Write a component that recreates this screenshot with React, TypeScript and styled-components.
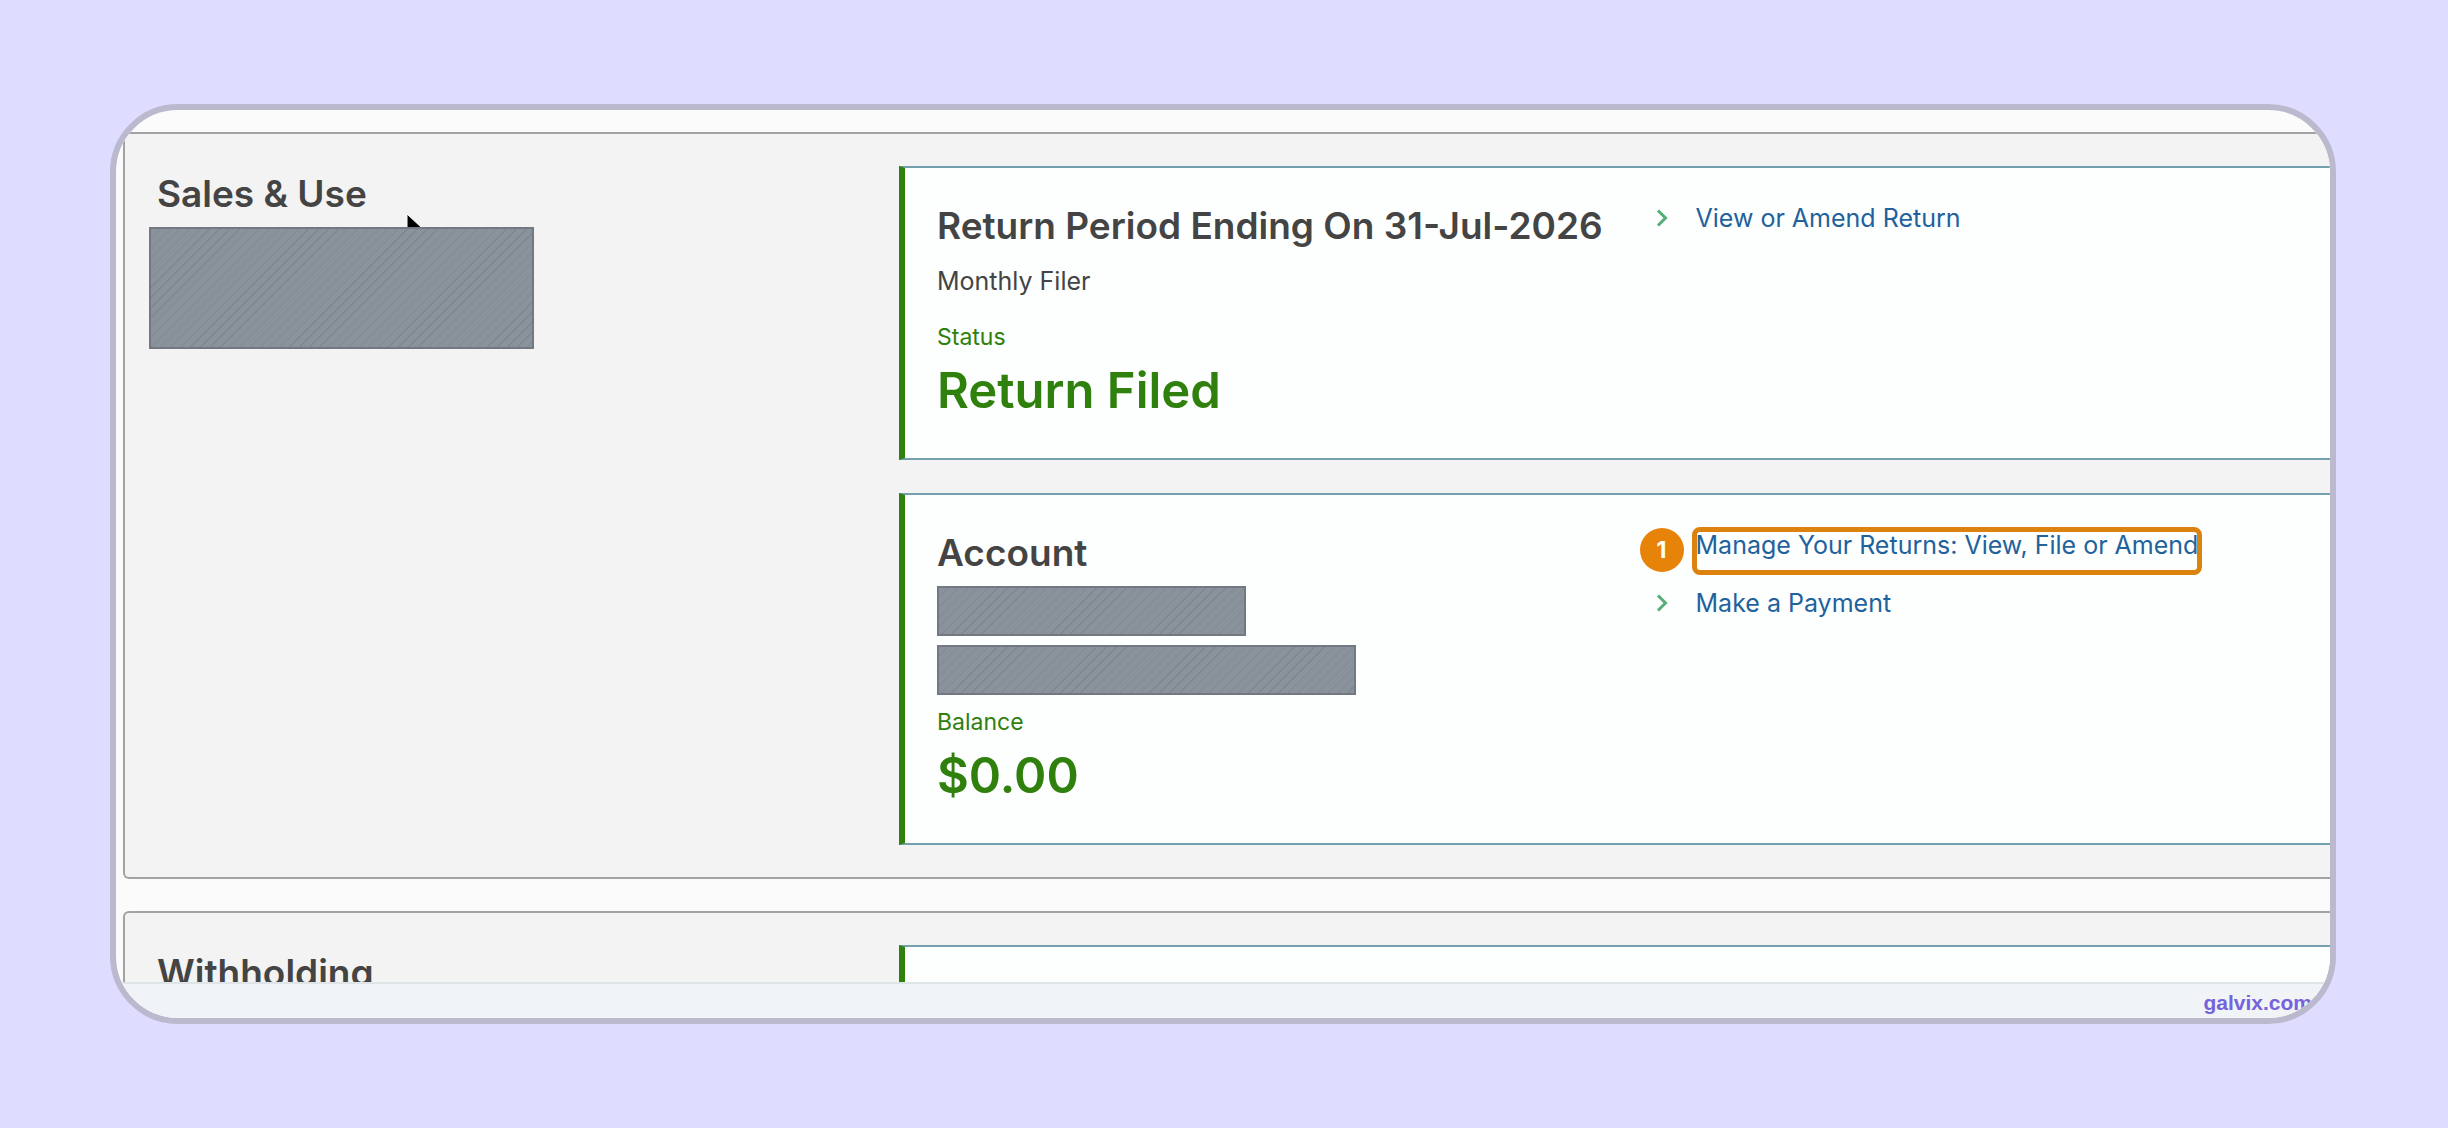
import React from 'react';
import styled, { createGlobalStyle } from 'styled-components';

const GlobalStyle = createGlobalStyle`
  *, *::before, *::after { box-sizing: border-box; }
  body {
    margin: 0;
    background: #dedcff;
    color: #444444;
    font-family: Inter, 'Liberation Sans', sans-serif;
  }
  h2, h3, p, ul, dl, dd { margin: 0; padding: 0; }
`;

const Page = styled.div`
  display: flex;
  height: 100vh;
  padding: 104px 112px 104px 110px;
`;

const Frame = styled.div`
  flex: 1;
  min-width: 0;
  display: flex;
  flex-direction: column;
  overflow: hidden;
  border: 6px solid #bbb9cd;
  border-radius: 68px;
  background: #fbfbfb;
`;

const Viewport = styled.main`
  flex: 1;
  min-height: 0;
  overflow: hidden;
  display: flex;
  flex-direction: column;
  gap: 32px;
  padding: 22px 0 0 7px;
`;

const Panel = styled.section`
  flex: none;
  display: grid;
  grid-template-columns: minmax(0, 742fr) minmax(0, 1431fr);
  padding: 32px 0 32px 32px;
  border: 2px solid #a2a2a2;
  border-right: 0;
  border-radius: 6px 0 0 6px;
  background: #f3f3f3;
`;

const PanelSide = styled.div`
  position: relative;
  padding-top: 4px;
`;

const Cards = styled.div`
  display: flex;
  flex-direction: column;
  gap: 33px;
`;

const Card = styled.article`
  display: grid;
  grid-template-columns: minmax(0, 718fr) minmax(0, 674fr);
  padding: 32px 0 37px 32px;
  border: 2px solid #74a0ae;
  border-left: 6px solid #2f800c;
  border-right: 0;
  background: #fdfefe;
`;

const CardBody = styled.div`
  padding-top: 2px;
`;

const PanelTitle = styled.h2`
  font-size: 37px;
  line-height: 48px;
  font-weight: 600;
`;

const CardTitle = styled.h3`
  font-size: 37px;
  line-height: 48px;
  font-weight: 600;
  white-space: nowrap;
`;

const Detail = styled.p`
  margin-top: 13px;
  font-size: 25px;
  line-height: 36px;
`;

const Summary = styled.dl<{ $gap: number }>`
  && { margin-top: ${(p) => p.$gap}px; }
  color: #2f800c;
`;

const SummaryLabel = styled.dt`
  font-size: 23px;
  line-height: 32px;
`;

const SummaryValue = styled.dd`
  && { margin-top: 8px; }
  font-size: 49px;
  line-height: 60px;
  font-weight: 600;
`;

const Redacted = styled.div<{ $width: number; $height: number; $outdent?: number }>`
  position: relative;
  width: ${(p) => p.$width}px;
  height: ${(p) => p.$height}px;
  margin: 9px 0 0 ${(p) => -(p.$outdent ?? 0)}px;
  border: 2px solid #737982;
  background: repeating-linear-gradient(135deg, #8a929b 0 6px, #7f8791 6px 7px);
`;

const Links = styled.ul`
  display: flex;
  flex-direction: column;
  gap: 22px;
  list-style: none;
`;

const LinkRow = styled.li`
  display: grid;
  grid-template-columns: 40px auto;
  justify-content: start;
  align-items: center;
  line-height: 36px;
`;

const Action = styled.a`
  position: relative;
  color: #1f629c;
  font-size: 25px;
  text-decoration: none;
  white-space: nowrap;
`;

const Highlight = styled.span`
  position: absolute;
  inset: 0 -4px -12px -4px;
  border: 5px solid #dc820f;
  border-radius: 8px;
`;

const StepAnchor = styled.span`
  position: relative;
  height: 36px;
`;

const Step = styled.span`
  position: absolute;
  top: 1px;
  left: -16px;
  width: 44px;
  height: 44px;
  border-radius: 50%;
  background: #e8830a;
  color: #ffffff;
  font-size: 23px;
  line-height: 44px;
  font-weight: 700;
  text-align: center;
`;

const Pointer = styled.svg`
  position: absolute;
  top: 47px;
  left: 248px;
`;

const Footer = styled.footer`
  flex: none;
  height: 36px;
  padding-right: 18px;
  border-top: 2px solid #dfe5e7;
  background: #f1f4f6;
  line-height: 38px;
  text-align: right;
`;

const Brand = styled.a`
  color: #7563dc;
  font-family: 'Liberation Sans', Arial, sans-serif;
  font-size: 21px;
  font-weight: 700;
  text-decoration: none;
`;

const Chevron = () => (
  <svg width="12" height="18" viewBox="0 0 12 18" fill="none" aria-hidden="true">
    <path d="M2 1.5l7.5 7.5-7.5 7.5" stroke="#55ad78" strokeWidth="3" />
  </svg>
);

type ActionItem = { label: string; step?: number };

const ActionList = ({ items }: { items: ActionItem[] }) => (
  <Links>
    {items.map(({ label, step }) => (
      <LinkRow key={label}>
        {step ? (
          <StepAnchor>
            <Step>{step}</Step>
          </StepAnchor>
        ) : (
          <Chevron />
        )}
        <Action href="#">
          {label}
          {step && <Highlight />}
        </Action>
      </LinkRow>
    ))}
  </Links>
);

export default function App() {
  return (
    <>
      <GlobalStyle />
      <Page>
        <Frame>
          <Viewport>
            <Panel>
              <PanelSide>
                <PanelTitle>Sales &amp; Use</PanelTitle>
                <Pointer width="18" height="22" viewBox="0 0 18 22" aria-hidden="true">
                  <path d="M2 1v19l5-5h10z" fill="#000" stroke="#fff" strokeWidth="1" />
                </Pointer>
                <Redacted $width={385} $height={122} $outdent={8} />
              </PanelSide>
              <Cards>
                <Card>
                  <CardBody>
                    <CardTitle>Return Period Ending On 31-Jul-2026</CardTitle>
                    <Detail>Monthly Filer</Detail>
                    <Summary $gap={22}>
                      <SummaryLabel>Status</SummaryLabel>
                      <SummaryValue>Return Filed</SummaryValue>
                    </Summary>
                  </CardBody>
                  <ActionList items={[{ label: 'View or Amend Return' }]} />
                </Card>
                <Card>
                  <CardBody>
                    <CardTitle>Account</CardTitle>
                    <Redacted $width={309} $height={50} />
                    <Redacted $width={419} $height={50} />
                    <Summary $gap={11}>
                      <SummaryLabel>Balance</SummaryLabel>
                      <SummaryValue>$0.00</SummaryValue>
                    </Summary>
                  </CardBody>
                  <ActionList
                    items={[
                      { label: 'Manage Your Returns: View, File or Amend', step: 1 },
                      { label: 'Make a Payment' },
                    ]}
                  />
                </Card>
              </Cards>
            </Panel>
            <Panel>
              <PanelSide>
                <PanelTitle>Withholding</PanelTitle>
              </PanelSide>
              <Cards>
                <Card />
              </Cards>
            </Panel>
          </Viewport>
          <Footer>
            <Brand href="#">galvix.com</Brand>
          </Footer>
        </Frame>
      </Page>
    </>
  );
}
